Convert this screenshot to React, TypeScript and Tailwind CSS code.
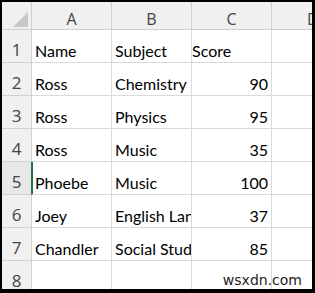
import React from 'react';

type Row = { n: number; a: string; b: string; c: string };

const ROWS: Row[] = [
  { n: 1, a: 'Name', b: 'Subject', c: 'Score' },
  { n: 2, a: 'Ross', b: 'Chemistry', c: '90' },
  { n: 3, a: 'Ross', b: 'Physics', c: '95' },
  { n: 4, a: 'Ross', b: 'Music', c: '35' },
  { n: 5, a: 'Phoebe', b: 'Music', c: '100' },
  { n: 6, a: 'Joey', b: 'English Language', c: '37' },
  { n: 7, a: 'Chandler', b: 'Social Studies', c: '85' },
  { n: 8, a: '', b: '', c: '' },
];

const cell =
  "h-[33px] border-r border-b border-[#dadada] flex items-end pb-[3px] text-[16px] leading-none text-black whitespace-nowrap overflow-hidden font-['Lato','Liberation_Sans',sans-serif]";

function ColHead({ label }: { label: string }) {
  return (
    <div className="h-[28px] bg-[#f0f0f0] border-r border-b border-[#d0d0d0] flex items-end justify-center pb-[2px] text-[16px] leading-none text-[#444] font-['Open_Sans','Liberation_Sans',sans-serif]">
      {label}
    </div>
  );
}

export default function App() {
  return (
    <div className="w-[315px] h-[293px] bg-black pt-[2px] pl-[2px] pr-[3px] pb-[4px]">
      <div className="relative w-full h-full bg-white overflow-hidden">
        <div className="grid grid-cols-[30px_80px_80px_80px_80px]">
          <div className="h-[28px] bg-[#f0f0f0] border-r border-b border-[#d0d0d0] flex items-end justify-end pr-[3px] pb-[2px]">
            <svg width="15" height="15" viewBox="0 0 15 15">
              <polygon points="15,0 15,15 0,15" fill="#c8c8c8" />
            </svg>
          </div>
          <ColHead label="A" />
          <ColHead label="B" />
          <ColHead label="C" />
          <div className="h-[28px] bg-[#f0f0f0] border-b border-[#d0d0d0] flex items-end pl-[35px] pb-[2px] text-[16px] leading-none text-[#444] font-['Open_Sans','Liberation_Sans',sans-serif]">
            D
          </div>

          {ROWS.map(r => (
            <React.Fragment key={r.n}>
              <div
                className={`h-[33px] border-r border-b border-[#d0d0d0] flex items-end justify-center pb-[4px] text-[17px] leading-none text-[#444] font-['Open_Sans','Liberation_Sans',sans-serif] ${r.n === 5 ? 'bg-[#e8e8e8]' : 'bg-[#f0f0f0]'}`}
              >
                {r.n}
              </div>
              <div className={`${cell} ${r.n === 5 ? 'border-l-2 border-l-[#217346] -ml-[1px] pl-[2px]' : 'pl-[3px]'}`}>
                {r.a}
              </div>
              <div className={`${cell} pl-[3px]`}>{r.b}</div>
              <div className={`${cell} justify-end pr-[3px]`}>
                {r.n === 1 ? <span className="mr-auto">{r.c}</span> : r.c}
              </div>
              <div className="h-[33px] border-b border-[#dadada]" />
            </React.Fragment>
          ))}
        </div>

        <div className="absolute right-[10px] bottom-[2px] text-[14px] leading-none text-[#222] font-['DejaVu_Sans','Liberation_Sans',sans-serif]">
          wsxdn.com
        </div>
      </div>
    </div>
  );
}
